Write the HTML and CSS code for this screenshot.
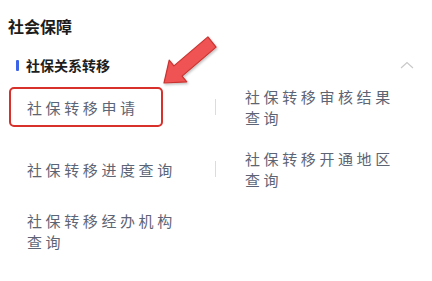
FILE: index.html
```html
<!DOCTYPE html>
<html lang="zh-CN">
<head>
<meta charset="utf-8">
<link rel="stylesheet" href="styles.css">
</head>
<body>
<div class="page">
  <h1 class="title">社会保障</h1>
  <div class="section-head">
    <span class="bar"></span>
    <span class="section-name">社保关系转移</span>
    <svg class="chev" width="14" height="8" viewBox="0 0 14 8"><polyline points="1,7 7,1.5 13,7" fill="none" stroke="#c9c9c9" stroke-width="1.2"/></svg>
  </div>
  <div class="grid">
    <div class="cell left"><div class="box"><span class="txt">社保转移申请</span></div></div>
    <div class="cell right"><span class="div"></span><span class="txt">社保转移审核结果查询</span></div>
    <div class="cell left"><span class="txt plain">社保转移进度查询</span></div>
    <div class="cell right"><span class="div"></span><span class="txt">社保转移开通地区查询</span></div>
    <div class="cell left"><span class="txt plain">社保转移经办机构查询</span></div>
    <div class="cell right"></div>
  </div>
  <svg class="arrow" width="432" height="281" viewBox="0 0 432 281">
    <defs>
      <filter id="sh" x="-20%" y="-20%" width="140%" height="140%">
        <feDropShadow dx="1" dy="1.5" stdDeviation="1" flood-color="#000" flood-opacity="0.25"/>
      </filter>
    </defs>
    <polygon filter="url(#sh)" points="207.9,36.9 216.1,47.1 182.1,76.1 186.8,81.9 164,83 169.2,60.1 173.9,65.9" fill="#f05252" stroke="#c93330" stroke-width="1.2" stroke-linejoin="round"/>
  </svg>
</div>
</body>
</html>
```
FILE: styles.css
```css
* { box-sizing: border-box; }
html, body { margin: 0; padding: 0; background: #fff; }
body {
  font-family: "Noto Sans CJK SC", "Noto Sans", sans-serif;
  width: 432px;
  height: 281px;
  overflow: hidden;
}
.page { position: relative; width: 432px; height: 281px; }
.title {
  margin: 0;
  padding: 14px 0 0 8px;
  font-size: 16px;
  line-height: 24px;
  font-weight: 700;
  color: #1d1d1d;
}
.section-head {
  display: flex;
  align-items: center;
  margin-top: 16px;
  height: 22px;
  padding-left: 16px;
  padding-right: 18px;
}
.bar {
  width: 3px;
  height: 11px;
  background: #3c64e6;
  border-radius: 1px;
  margin-right: 7px;
}
.section-name {
  font-size: 14px;
  font-weight: 700;
  color: #1d1d1d;
  line-height: 22px;
}
.chev { margin-left: auto; }
.grid {
  display: grid;
  grid-template-columns: 215px 1fr;
  grid-auto-rows: 62px;
}
.cell { display: flex; align-items: center; }
.txt {
  font-size: 15px;
  letter-spacing: 3.6px;
  line-height: 21px;
  color: #5d6474;
  width: 156px;
}
.left .plain { margin-left: 27px; }
.box {
  margin-left: 9px;
  width: 154px;
  height: 40px;
  border: 2.5px solid #d8302b;
  border-radius: 5px;
  display: flex;
  align-items: center;
  padding-left: 16px;
}
.box .txt { width: auto; }
.div {
  width: 1px;
  height: 16px;
  background: #dcdcdc;
  margin-right: 29px;
}
.arrow {
  position: absolute;
  left: 0;
  top: 0;
  pointer-events: none;
}
```
